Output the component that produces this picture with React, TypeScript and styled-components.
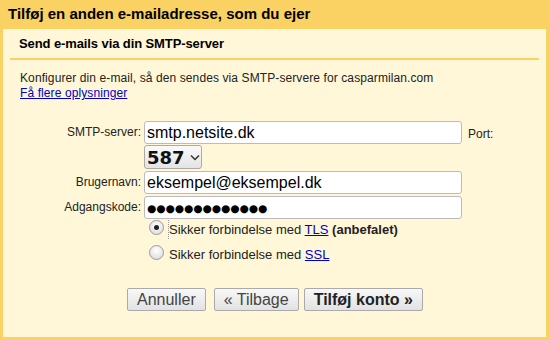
import styled, { createGlobalStyle } from "styled-components";

const GlobalStyle = createGlobalStyle`
  html, body {
    margin: 0;
    padding: 0;
    background: #fad163;
    font-family: "Liberation Sans", Arial, sans-serif;
    color: #222;
  }
`;

const Page = styled.div`
  width: 550px;
  height: 340px;
  box-sizing: border-box;
  padding: 0 4px 3px 3px;
  display: flex;
  flex-direction: column;
  overflow: hidden;
`;

const Title = styled.h1`
  margin: 0;
  height: 29px;
  padding-left: 5px;
  box-sizing: border-box;
  font-size: 15px;
  font-weight: bold;
  line-height: 28px;
  color: #000;
`;

const Panel = styled.div`
  flex: 1;
  background: #fff7d7;
  display: flex;
  flex-direction: column;
`;

const Subtitle = styled.h2`
  margin: 0 7px;
  padding: 7px 9px 0;
  height: 31px;
  box-sizing: border-box;
  font-size: 13px;
  font-weight: bold;
  letter-spacing: -0.1px;
  color: #000;
  border-bottom: 2px solid #fad163;
`;

const Intro = styled.div`
  padding: 11px 17px 0;
  font-size: 12px;
  letter-spacing: 0.1px;
  line-height: 15px;
`;

const Link = styled.a`
  color: #00c;
  text-decoration: underline;
`;

const Form = styled.div`
  display: grid;
  grid-template-columns: 138px 318px auto;
  column-gap: 3px;
  row-gap: 2px;
  margin-top: 20px;
  align-items: start;
`;

const Label = styled.label`
  font-size: 12px;
  text-align: right;
  padding-top: 4px;
  color: #222;
`;

const TextInput = styled.input<{ $dots?: boolean }>`
  box-sizing: border-box;
  width: 100%;
  height: 23px;
  margin: 0;
  padding: 0 2px;
  border: 1px solid #bbb;
  border-radius: 3px;
  background: #fff;
  font-family: ${(p) => (p.$dots ? '"DejaVu Sans", sans-serif' : '"Liberation Sans", Arial, sans-serif')};
  font-size: ${(p) => (p.$dots ? "10.6px" : "16px")};
  color: #000;
  outline: none;
`;

const PortLabel = styled.span`
  font-size: 12px;
  padding: 6px 0 0 3px;
`;

const Select = styled.div`
  grid-column: 2 / span 2;
  margin-top: -1px;
  width: 58px;
  height: 24px;
  box-sizing: border-box;
  border: 1px solid #aaa;
  border-radius: 3px;
  background: linear-gradient(#fafafa, #e4e4e4);
  display: flex;
  align-items: center;
  gap: 5px;
  padding-left: 2px;
  font-family: "DejaVu Sans", sans-serif;
  font-size: 18px;
  font-weight: bold;
  color: #111;
`;

const Options = styled.div`
  display: flex;
  flex-direction: column;
  gap: 8px;
  margin: 2px 0 0 146px;
`;

const OptionRow = styled.label`
  display: flex;
  align-items: center;
  gap: 4px;
  font-size: 13px;
  height: 17px;
`;

const OptionText = styled.span<{ $focused?: boolean }>`
  border-left: 1px dotted ${(p) => (p.$focused ? "#999" : "transparent")};
  padding: 2px 0 2px 0;
`;

const Radio = styled.span<{ $checked?: boolean }>`
  width: 15px;
  height: 15px;
  box-sizing: border-box;
  border-radius: 50%;
  border: 1px solid #9a9a9a;
  background: radial-gradient(circle at 50% 35%, #ffffff, #d8d8d8);
  display: flex;
  align-items: center;
  justify-content: center;
  margin-bottom: 4px;

  &::after {
    content: "";
    width: 5px;
    height: 5px;
    border-radius: 50%;
    background: ${(p) => (p.$checked ? "#222" : "transparent")};
  }
`;

const Buttons = styled.div`
  display: flex;
  gap: 5px;
  margin: 25px 0 0 124px;
`;

const Button = styled.button<{ $primary?: boolean; $spaced?: boolean }>`
  height: 23px;
  box-sizing: border-box;
  padding: 0 9px;
  margin-right: ${(p) => (p.$spaced ? "3px" : "0")};
  border: 1px solid #aaa;
  border-radius: 2px;
  background: linear-gradient(#f8f8f8, #e2e2e2);
  font-family: "Liberation Sans", Arial, sans-serif;
  font-size: 16px;
  font-weight: ${(p) => (p.$primary ? "bold" : "normal")};
  color: ${(p) => (p.$primary ? "#222" : "#444")};
`;

export default function App() {
  return (
    <>
      <GlobalStyle />
      <Page>
        <Title>Tilføj en anden e-mailadresse, som du ejer</Title>
        <Panel>
          <Subtitle>Send e-mails via din SMTP-server</Subtitle>
          <Intro>
            Konfigurer din e-mail, så den sendes via SMTP-servere for casparmilan.com
            <br />
            <Link href="#">Få flere oplysninger</Link>
          </Intro>
          <Form>
            <Label>SMTP-server:</Label>
            <TextInput defaultValue="smtp.netsite.dk" />
            <PortLabel>Port:</PortLabel>
            <Select>
              587
              <svg width="10" height="7" viewBox="0 0 10 7">
                <path d="M1 1.5 L5 5.5 L9 1.5" fill="none" stroke="#333" strokeWidth="1.5" />
              </svg>
            </Select>
            <Label>Brugernavn:</Label>
            <TextInput defaultValue="eksempel@eksempel.dk" />
            <span />
            <Label>Adgangskode:</Label>
            <TextInput $dots defaultValue="●●●●●●●●●●●●●" />
            <span />
          </Form>
          <Options>
            <OptionRow>
              <Radio $checked />
              <OptionText $focused>
                Sikker forbindelse med <Link href="#">TLS</Link> <b>(anbefalet)</b>
              </OptionText>
            </OptionRow>
            <OptionRow>
              <Radio />
              <OptionText>
                Sikker forbindelse med <Link href="#">SSL</Link>
              </OptionText>
            </OptionRow>
          </Options>
          <Buttons>
            <Button $spaced>Annuller</Button>
            <Button>« Tilbage</Button>
            <Button $primary>Tilføj konto »</Button>
          </Buttons>
        </Panel>
      </Page>
    </>
  );
}
